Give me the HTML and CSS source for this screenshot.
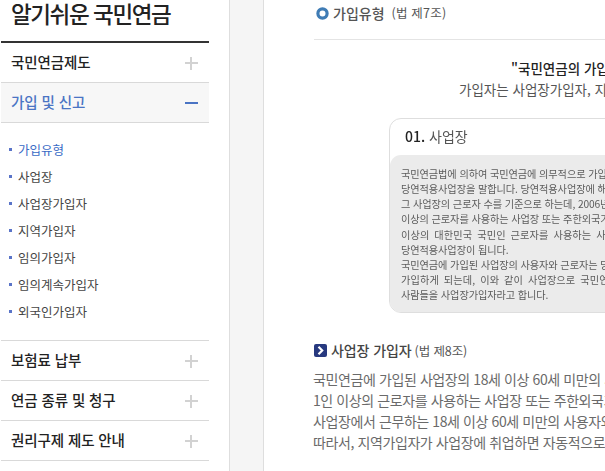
FILE: index.html
```html
<!DOCTYPE html>
<html lang="ko">
<head>
<meta charset="utf-8">
<title>알기쉬운 국민연금</title>
<link rel="stylesheet" href="styles.css">
</head>
<body>
<div class="page">
  <aside class="side">
    <h1 class="side-title">알기쉬운 국민연금</h1>
    <div class="menu-row"><span>국민연금제도</span><i class="plus"></i></div>
    <div class="menu-row active"><span>가입 및 신고</span><i class="minus"></i></div>
    <ul class="sub">
      <li class="on">가입유형</li>
      <li>사업장</li>
      <li>사업장가입자</li>
      <li>지역가입자</li>
      <li>임의가입자</li>
      <li>임의계속가입자</li>
      <li>외국인가입자</li>
    </ul>
    <div class="menu-row"><span>보험료 납부</span><i class="plus"></i></div>
    <div class="menu-row"><span>연금 종류 및 청구</span><i class="plus"></i></div>
    <div class="menu-row"><span>권리구제 제도 안내</span><i class="plus"></i></div>
  </aside>
  <div class="gutter"></div>
  <main class="main">
    <h2 class="head"><svg class="ring" width="13" height="13" viewBox="0 0 13 13"><circle cx="6.5" cy="6.5" r="4.6" fill="none" stroke="#3f7cb5" stroke-width="3.2"/></svg><b>가입유형</b><small>(법 제7조)</small></h2>
    <hr class="rule">
    <div class="lead">
      <p class="lead-b">"국민연금의 가입자는 법에서 정한 바에 따라 구분됩니다"</p>
      <p class="lead-t">가입자는 사업장가입자, 지역가입자, 임의가입자, 임의계속가입자로 구분됩니다</p>
    </div>
    <section class="card">
      <h3 class="card-title"><b>01.</b> 사업장</h3>
      <div class="card-body">
        <p>국민연금법에 의하여 국민연금에 의무적으로 가입하여야 하는 사업장을</p>
        <p>당연적용사업장을 말합니다. 당연적용사업장에 해당하는지의 여부는</p>
        <p>그 사업장의 근로자 수를 기준으로 하는데, 2006년 1월 1일부터는 1인</p>
        <p>이상의 근로자를 사용하는 사업장 또는 주한외국기관으로서 1인</p>
        <p class="wide">이상의 대한민국 국민인 근로자를 사용하는 사업장은 모두</p>
        <p>당연적용사업장이 됩니다.</p>
        <p>국민연금에 가입된 사업장의 사용자와 근로자는 당연히 사업장가입자로</p>
        <p class="wide">가입하게 되는데, 이와 같이 사업장으로 국민연금에 가입된</p>
        <p>사람들을 사업장가입자라고 합니다.</p>
      </div>
    </section>
    <h2 class="head2"><svg class="arrow" width="13" height="13" viewBox="0 0 13 13"><rect width="13" height="13" rx="2" fill="#27397f"/><path d="M4.5 2.8 8.2 6.5 4.5 10.2" fill="none" stroke="#fff" stroke-width="2.2"/></svg><b>사업장 가입자</b><small>(법 제8조)</small></h2>
    <div class="body">
      <p>국민연금에 가입된 사업장의 18세 이상 60세 미만의 사용자와 근로자로서</p>
      <p>1인 이상의 근로자를 사용하는 사업장 또는 주한외국기관으로서 1인 이상의</p>
      <p>사업장에서 근무하는 18세 이상 60세 미만의 사용자와 근로자는 당연히</p>
      <p>따라서, 지역가입자가 사업장에 취업하면 자동적으로 사업장가입자가 됩니다</p>
    </div>
  </main>
</div>
</body>
</html>
```
FILE: styles.css
```css
html, body { margin: 0; padding: 0; height: 100%; background: #fff; overflow: hidden; }
body { font-family: "Noto Sans CJK KR", "Liberation Sans", sans-serif; }
.page { display: flex; width: 605px; height: 471px; overflow: hidden; }
.side { width: 208px; margin-left: 1px; flex: none; }
.side-title { margin: 0; height: 41px; font-size: 22.5px; font-weight: 500; line-height: 26px; color: #222; padding-left: 10px; letter-spacing: -1.4px; border-bottom: 2px solid #333; }
.menu-row { display: flex; justify-content: space-between; align-items: center; height: 39px; padding: 0 11px 0 10px; border-bottom: 1px solid #d9d9d9; font-size: 14.5px; font-weight: 500; color: #222; letter-spacing: -0.1px; }
.menu-row span { padding-bottom: 3px; }
.menu-row.active { background: #f7f7f7; color: #4a74c4; }
.plus, .minus { position: relative; display: block; width: 13px; height: 13px; margin-top: 1px; }
.plus::before, .minus::before { content: ""; position: absolute; left: 0; right: 0; top: 5px; height: 2px; background: #d2d2d2; }
.plus::after { content: ""; position: absolute; top: 0; bottom: 0; left: 5px; width: 2px; background: #d2d2d2; }
.minus::before { background: #4a74c4; }
.sub { list-style: none; margin: 0; padding: 13px 0 15px 8px; border-bottom: 1px solid #d9d9d9; }
.sub li { display: flex; align-items: center; gap: 6px; height: 27px; font-size: 12.5px; color: #444; }
.sub li::before { content: ""; width: 3px; height: 3px; background: #5a74c8; }
.sub li.on { color: #3a6bc6; }
.gutter { width: 35px; box-sizing: border-box; margin-left: 20px; flex: none; background: #f5f5f5; border-left: 1px solid #dedede; border-right: 1px solid #dedede; }
.main { flex: 1; min-width: 0; padding-left: 50px; overflow: hidden; white-space: nowrap; }
.head { margin: 0; height: 39px; display: flex; align-items: flex-start; gap: 4px; padding: 4px 0 0 2px; box-sizing: border-box; font-size: 14px; font-weight: 400; color: #555; line-height: 18px; }
.head b { font-weight: 500; }
.head small, .head2 small { font-size: 12.5px; color: #555; font-weight: 400; }
.head small { margin-left: 3px; letter-spacing: 0.2px; }
.head .ring { margin-top: 3px; }
.rule { margin: 0; height: 1px; border: 0; background: #e4e4e4; }
.lead { padding: 18px 0 0 197px; }
.lead p { margin: 0; }
.lead-b { font-size: 13.5px; font-weight: 500; color: #222; line-height: 21px; }
.lead-t { font-size: 13.5px; color: #555; line-height: 21px; margin-left: -52px !important; }
.card { margin: 18px 0 0 75px; width: 280px; height: 195px; border: 1px solid #dedede; border-radius: 12px; box-sizing: border-box; filter: blur(0.3px); }
.card-title { margin: 0; height: 36px; padding: 7px 0 0 15px; box-sizing: border-box; font-size: 14px; font-weight: 400; line-height: 20px; color: #555; }
.card-title b { font-weight: 500; color: #222; }
.card-body { height: 157px; background: #ebebeb; border-radius: 11px; padding: 11px 0 0 11px; box-sizing: border-box; overflow: hidden; font-size: 10.2px; line-height: 15.15px; color: #5c5c5c; letter-spacing: -0.1px; }
.card-body p { margin: 0; }
.card-body .wide { word-spacing: 2px; letter-spacing: 0.1px; }
.head2 { margin: 27px 0 0; height: 20px; display: flex; align-items: center; gap: 4px; font-size: 14px; font-weight: 400; color: #444; }
.head2 b { font-weight: 500; letter-spacing: -0.1px; }
.head2 small { margin-left: -1px; letter-spacing: -0.1px; }
.body { margin-left: -1px; padding-top: 9px; font-size: 14px; line-height: 21px; color: #6a6a6a; letter-spacing: -0.4px; }
.body p { margin: 0; }
```
